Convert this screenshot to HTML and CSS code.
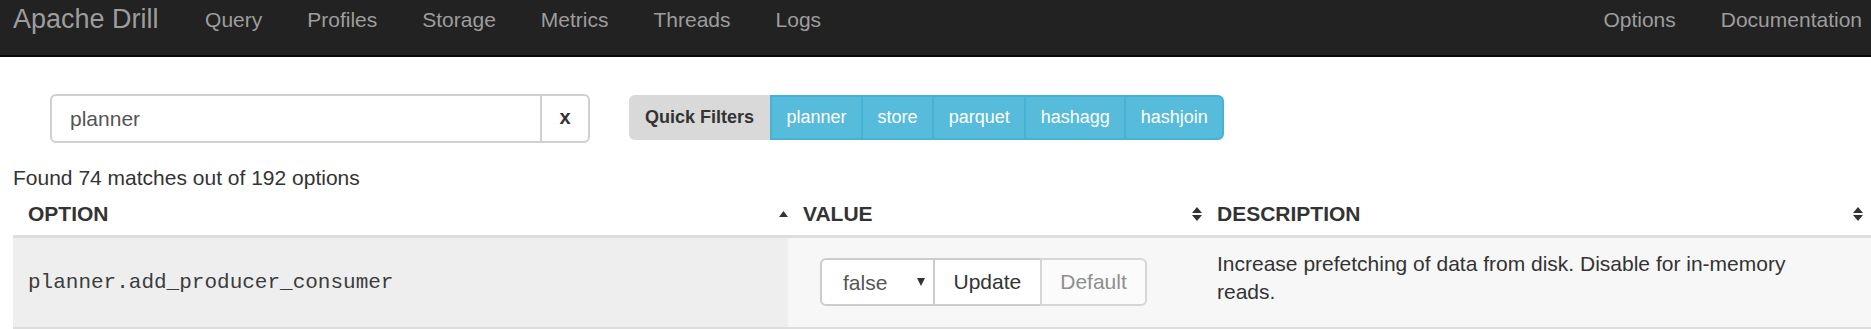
FILE: index.html
```html
<!DOCTYPE html>
<html lang="en">
  <head>
    <meta charset="UTF-8" />
    <title>Apache Drill - Options</title>
    <link rel="stylesheet" href="styles.css">
  </head>
  <body>
    <nav class="navbar">
      <a class="brand" href="#">Apache Drill</a>
      <ul class="nav">
        <li><a href="#">Query</a></li>
        <li><a href="#">Profiles</a></li>
        <li><a href="#">Storage</a></li>
        <li><a href="#">Metrics</a></li>
        <li><a href="#">Threads</a></li>
        <li><a href="#">Logs</a></li>
      </ul>
      <ul class="nav nav-right">
        <li><a href="#">Options</a></li>
        <li><a href="#">Documentation</a></li>
      </ul>
    </nav>

    <div class="page">
      <div class="search-row">
        <div class="search-group">
          <input class="search-input" type="text" value="planner" />
          <button class="clear-btn">x</button>
        </div>
        <div class="filters">
          <span class="filters-label">Quick Filters</span>
          <button class="filter-btn">planner</button>
          <button class="filter-btn">store</button>
          <button class="filter-btn">parquet</button>
          <button class="filter-btn">hashagg</button>
          <button class="filter-btn">hashjoin</button>
        </div>
      </div>

      <p class="found">Found 74 matches out of 192 options</p>

      <table class="options-table">
        <colgroup>
          <col class="col-option" />
          <col class="col-value" />
          <col class="col-desc" />
        </colgroup>
        <thead>
          <tr>
            <th>
              OPTION
              <svg class="sort-icon" width="9" height="6" viewBox="0 0 9 6"><path d="M4.5 0L9 6H0z" /></svg>
            </th>
            <th>
              VALUE
              <svg class="sort-icon" width="10" height="14" viewBox="0 0 10 14"><path d="M5 0L10 6H0zM5 14L0 8H10z" /></svg>
            </th>
            <th>
              DESCRIPTION
              <svg class="sort-icon" width="10" height="14" viewBox="0 0 10 14"><path d="M5 0L10 6H0zM5 14L0 8H10z" /></svg>
            </th>
          </tr>
        </thead>
        <tbody>
          <tr>
            <td class="option-name">planner.add_producer_consumer</td>
            <td>
              <div class="value-group">
                <span class="select-wrap">
                  <select class="value-select">
                    <option>false</option>
                    <option>true</option>
                  </select>
                  <svg class="select-arrow" width="8" height="8" viewBox="0 0 8 8"><path d="M0 0H8L4 8z" /></svg>
                </span>
                <button class="btn-update">Update</button>
                <button class="btn-default" disabled>Default</button>
              </div>
            </td>
            <td class="option-desc">Increase prefetching of data from disk. Disable for in-memory reads.</td>
          </tr>
        </tbody>
      </table>
    </div>
  </body>
</html>
```

FILE: styles.css
```css
body {
  margin: 0;
  font-family: "Liberation Sans", Arial, sans-serif;
  font-size: 21px;
  color: #333;
  background-color: #fff;
}

/* top navigation */
.navbar {
  display: flex;
  align-items: flex-start;
  height: 57px;
  padding: 4px 0 0 13px;
  box-sizing: border-box;
  background-color: #222;
  border-bottom: 2px solid #080808;
}
.brand {
  font-size: 27px;
  line-height: 30px;
  color: #9d9d9d;
  text-decoration: none;
  margin-right: 24px;
}
.nav {
  display: flex;
  list-style: none;
  margin: 0;
  padding: 0;
}
.nav a {
  display: block;
  padding: 0 22.5px;
  line-height: 31px;
  color: #9d9d9d;
  text-decoration: none;
}
.nav-right {
  margin-left: auto;
  margin-right: -13.5px;
}

.page {
  padding-left: 13px;
}

/* search + quick filters */
.search-row {
  display: flex;
  align-items: flex-start;
  margin: 37px 0 0 37px;
}
.search-group {
  display: flex;
}
.search-input {
  width: 492px;
  height: 49px;
  box-sizing: border-box;
  border: 2px solid #d0d0d0;
  border-radius: 6px 0 0 6px;
  padding: 0 18px;
  font-family: inherit;
  font-size: 21px;
  color: #555;
  outline: none;
}
.clear-btn {
  width: 50px;
  height: 49px;
  margin-left: -2px;
  box-sizing: border-box;
  border: 2px solid #d0d0d0;
  border-radius: 0 6px 6px 0;
  background-color: #fff;
  font-family: inherit;
  font-size: 20px;
  font-weight: bold;
  color: #333;
  padding: 0 0 3px;
}
.filters {
  display: flex;
  margin: 1px 0 0 39px;
  height: 45px;
}
.filters-label {
  display: flex;
  align-items: center;
  padding: 0 16px;
  background-color: #d9d9d9;
  border-radius: 6px 0 0 6px;
  font-size: 18px;
  font-weight: bold;
  color: #333;
}
.filter-btn {
  height: 45px;
  box-sizing: border-box;
  padding: 0 14.5px;
  background-color: #57bbdb;
  border: 2px solid #46b3d6;
  border-right: none;
  font-family: inherit;
  font-size: 18px;
  color: #fff;
}
.filter-btn:last-child {
  border-right: 2px solid #46b3d6;
  border-radius: 0 6px 6px 0;
}

.found {
  margin: 20px 0 0;
  line-height: 30px;
}

/* options table */
.options-table {
  width: 1858px;
  table-layout: fixed;
  border-collapse: separate;
  border-spacing: 0;
}
.col-option {
  width: 775px;
}
.col-value {
  width: 414px;
}
.col-desc {
  width: 669px;
}
.options-table th {
  position: relative;
  text-align: left;
  font-weight: bold;
  line-height: 30px;
  padding: 6px 15px 6.3px;
  border-bottom: 3px solid #ddd;
}
.sort-icon {
  position: absolute;
  right: 0;
  top: 50%;
  transform: translateY(-50%);
  fill: #333;
}
.options-table th:last-child .sort-icon {
  right: 8px;
}
.options-table td {
  vertical-align: top;
  padding: 12px 15px;
  line-height: 28px;
  background-color: #f7f7f7;
  border-bottom: 2px solid #ddd;
}
.options-table td.option-name {
  vertical-align: middle;
  background-color: #eee;
  font-family: "Liberation Mono", "Courier New", monospace;
  font-size: 21px;
  color: #3c3c3c;
}
.options-table td.option-desc {
  padding-right: 30px;
}

.value-group {
  display: flex;
  margin: 8px 0 9px 17px;
  height: 48px;
}
.select-wrap {
  position: relative;
  display: block;
}
.value-select {
  appearance: none;
  -webkit-appearance: none;
  width: 115px;
  height: 48px;
  box-sizing: border-box;
  border: 2px solid #ccc;
  border-radius: 6px 0 0 6px;
  padding: 0 0 0 21px;
  background-color: #fff;
  font-family: inherit;
  font-size: 21px;
  color: #555;
}
.select-arrow {
  position: absolute;
  left: 97px;
  top: 20px;
  fill: #333;
}
.btn-update,
.btn-default {
  height: 48px;
  box-sizing: border-box;
  margin-left: -2px;
  padding: 0 18.5px;
  border: 2px solid #ccc;
  font-family: inherit;
  font-size: 21px;
}
.btn-update {
  background-color: #fff;
  color: #333;
}
.btn-default {
  background-color: #fbfbfb;
  color: #8e8e8e;
  border-color: #d6d6d6;
  border-radius: 0 6px 6px 0;
}
```
